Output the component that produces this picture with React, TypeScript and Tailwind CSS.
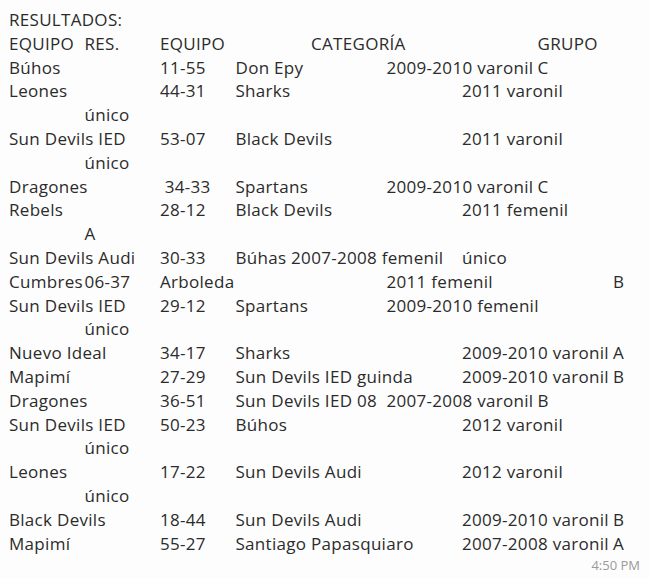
import React from "react";

type Cell = [number, string];

const COLS = [
  "col-start-1",
  "col-start-2",
  "col-start-3",
  "col-start-4",
  "col-start-5",
  "col-start-6",
  "col-start-7",
  "col-start-8",
  "col-start-9",
];

const rows: Cell[][] = [
  [[0, "RESULTADOS:"]],
  [[0, "EQUIPO"], [1, "RES."], [2, "EQUIPO"], [4, "CATEGORÍA"], [7, "GRUPO"]],
  [[0, "Búhos"], [2, "11-55"], [3, "Don Epy"], [5, "2009-2010 varonil"], [7, "C"]],
  [[0, "Leones"], [2, "44-31"], [3, "Sharks"], [6, "2011 varonil"]],
  [[1, "único"]],
  [[0, "Sun Devils IED"], [2, "53-07"], [3, "Black Devils"], [6, "2011 varonil"]],
  [[1, "único"]],
  [[0, "Dragones"], [2, " 34-33"], [3, "Spartans"], [5, "2009-2010 varonil"], [7, "C"]],
  [[0, "Rebels"], [2, "28-12"], [3, "Black Devils"], [6, "2011 femenil"]],
  [[1, "A"]],
  [[0, "Sun Devils Audi"], [2, "30-33"], [3, "Búhas 2007-2008 femenil"], [6, "único"]],
  [[0, "Cumbres"], [1, "06-37"], [2, "Arboleda"], [5, "2011 femenil"], [8, "B"]],
  [[0, "Sun Devils IED"], [2, "29-12"], [3, "Spartans"], [5, "2009-2010 femenil"]],
  [[1, "único"]],
  [[0, "Nuevo Ideal"], [2, "34-17"], [3, "Sharks"], [6, "2009-2010 varonil"], [8, "A"]],
  [[0, "Mapimí"], [2, "27-29"], [3, "Sun Devils IED guinda"], [6, "2009-2010 varonil"], [8, "B"]],
  [[0, "Dragones"], [2, "36-51"], [3, "Sun Devils IED 08"], [5, "2007-2008 varonil"], [7, "B"]],
  [[0, "Sun Devils IED"], [2, "50-23"], [3, "Búhos"], [6, "2012 varonil"]],
  [[1, "único"]],
  [[0, "Leones"], [2, "17-22"], [3, "Sun Devils Audi"], [6, "2012 varonil"]],
  [[1, "único"]],
  [[0, "Black Devils"], [2, "18-44"], [3, "Sun Devils Audi"], [6, "2009-2010 varonil"], [8, "B"]],
  [[0, "Mapimí"], [2, "55-27"], [3, "Santiago Papasquiaro"], [6, "2007-2008 varonil"], [8, "A"]],
];

export default function App() {
  return (
    <div className="w-[649px] h-[579px] bg-[#fdfdfd] overflow-hidden font-['Open_Sans',sans-serif] text-[#2b2b2b]">
      <div className="pt-[8px] pl-[9px] pr-[9px]">
        <div className="flex flex-col text-[17px] leading-[23.8px] tracking-[0.3px]">
          {rows.map((row, i) => (
            <div key={i} className="grid grid-cols-[repeat(8,75.5px)_1fr] h-[23.8px]">
              {row.map(([c, t], j) => (
                <span key={j} className={`${COLS[c]} row-start-1 whitespace-pre`}>
                  {t}
                </span>
              ))}
            </div>
          ))}
        </div>
        <div className="flex justify-end pr-[0px] mt-[0px]">
          <span className="text-[13px] leading-[20px] text-[#9a9a9a]">4:50 PM</span>
        </div>
      </div>
    </div>
  );
}
